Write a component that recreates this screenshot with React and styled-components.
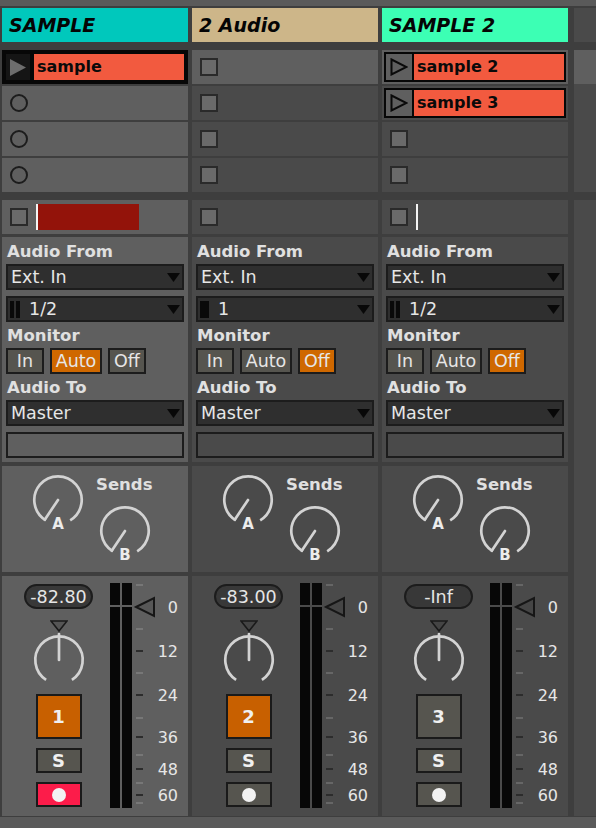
import React from 'react';
import styled, { createGlobalStyle } from 'styled-components';

const FONT = '"DejaVu Sans", "Liberation Sans", sans-serif';
const SEL = '#5f5f5f';
const DIM = '#4a4a4a';
const GAP = '#3e3e3e';
const EDGE = '#1c1c1c';
const BTN = '#56554f';
const TXT = '#e6e6e6';

const Global = createGlobalStyle`
  html, body { margin: 0; padding: 0; background: ${GAP}; }
  body { font-family: ${FONT}; }
  #root { width: 596px; height: 828px; }
  *, *::before, *::after { box-sizing: border-box; }
`;

const Page = styled.div`
  width: 596px;
  height: 828px;
  background: ${GAP};
  display: flex;
  flex-direction: column;
  overflow: hidden;
`;

const EdgeStrip = styled.div`
  flex: none;
  height: ${(p) => p.$h}px;
  background: #5a5a5a;
  margin-top: ${(p) => p.$mt || 0}px;
  margin-bottom: ${(p) => p.$mb || 0}px;
`;

const Tracks = styled.div`
  flex: none;
  height: 808px;
  display: flex;
  gap: 4px;
  padding-left: 2px;
`;

const TrackCol = styled.div`
  width: 186px;
  display: flex;
  flex-direction: column;
`;

const Header = styled.div`
  height: 34px;
  background: ${(p) => p.$color};
  color: #050505;
  font-weight: bold;
  font-style: italic;
  font-size: 19px;
  line-height: 34px;
  padding-left: 7px;
  white-space: nowrap;
`;

const Slots = styled.div`
  margin-top: 8px;
  display: flex;
  flex-direction: column;
  gap: 2px;
`;

const Slot = styled.div`
  height: 34px;
  background: ${(p) => p.$bg};
  display: flex;
  align-items: center;
  padding-left: ${(p) => (p.$full ? 0 : 8)}px;
`;

const StopSquare = styled.span`
  flex: none;
  width: 18px;
  height: 18px;
  border: 2px solid #2a2a2a;
  background: #6a6a6a;
`;

const ArmCircle = styled.span`
  flex: none;
  width: 18px;
  height: 18px;
  border-radius: 50%;
  border: 2px solid ${EDGE};
`;

const ClipFrame = styled.div`
  flex: 1;
  align-self: stretch;
  margin: ${(p) => (p.$sel ? '0' : '2px 2px 2px -6px')};
  border: ${(p) => (p.$sel ? 4 : 2)}px solid #070707;
  background: #070707;
  display: flex;
  gap: ${(p) => (p.$sel ? 4 : 2)}px;
`;

const PlayArea = styled.div`
  flex: none;
  width: ${(p) => (p.$sel ? 24 : 26)}px;
  background: ${(p) => (p.$sel ? '#151515' : SEL)};
  display: flex;
  align-items: center;
  justify-content: center;
`;

const ClipName = styled.div`
  flex: 1;
  background: #f25a3f;
  color: #0a0a0a;
  font-weight: bold;
  font-size: 16px;
  line-height: 26px;
  padding-left: 3px;
  white-space: nowrap;
`;

const StatusRow = styled(Slot)`
  margin-top: 8px;
`;

const LaunchBar = styled.span`
  flex: none;
  margin-left: 8px;
  height: 26px;
  width: ${(p) => p.$w}px;
  border-left: 2px solid #f4f4f4;
  background: #93130a;
`;

const IOPanel = styled.div`
  margin-top: 3px;
  height: 225px;
  background: ${(p) => p.$bg};
  padding: 1px 4px 0;
  display: flex;
  flex-direction: column;
`;

const SectionLabel = styled.div`
  height: 26px;
  line-height: 28px;
  padding-left: 1px;
  font-weight: bold;
  font-size: 16.5px;
  color: #e0e0e0;
  white-space: nowrap;
`;

const Chooser = styled.div`
  height: 26px;
  margin-top: ${(p) => p.$mt || 0}px;
  background: #2f2f2f;
  border: 2px solid ${EDGE};
  display: flex;
  align-items: center;
  padding: 0 2px 0 3px;
  font-size: 17.5px;
  color: ${TXT};
  white-space: nowrap;
`;

const ChooserText = styled.span`
  flex: 1;
  margin-left: ${(p) => p.$ml || 0}px;
`;

const ChannelIcon = styled.span`
  display: flex;
  gap: 2px;
  height: 17px;
  margin-left: -1px;
`;

const ChannelBar = styled.span`
  width: ${(p) => p.$w}px;
  background: #0a0a0a;
`;

const MonitorRow = styled.div`
  height: 26px;
  display: flex;
  gap: 6px;
`;

const MonitorButton = styled.div`
  width: ${(p) => p.$w}px;
  border: 2px solid ${EDGE};
  background: ${(p) => (p.$on ? '#cf6800' : BTN)};
  color: ${TXT};
  font-size: 17.5px;
  display: flex;
  align-items: center;
  justify-content: center;
`;

const EmptyBox = styled.div`
  height: 26px;
  margin-top: 6px;
  border: 2px solid ${EDGE};
`;

const SendsPanel = styled.div`
  margin-top: 4px;
  height: 106px;
  background: ${(p) => p.$bg};
  display: flex;
  padding: 7px 0 0 29px;
`;

const KnobGroup = styled.div`
  display: flex;
  flex-direction: column;
  align-items: center;
  width: 54px;
  margin-left: ${(p) => p.$ml || 0}px;
  margin-top: ${(p) => p.$mt || 0}px;
`;

const KnobLetter = styled.span`
  margin-top: -10px;
  font-weight: bold;
  font-size: 15px;
  line-height: 14px;
  color: #ececec;
`;

const SendsSide = styled.div`
  display: flex;
  flex-direction: column;
  margin-left: 11px;
`;

const SendsTitle = styled.div`
  margin-top: 2px;
  height: 20px;
  line-height: 20px;
  font-weight: bold;
  font-size: 16.5px;
  color: #e0e0e0;
`;

const Mixer = styled.div`
  margin-top: 4px;
  height: 240px;
  background: ${(p) => p.$bg};
  display: flex;
`;

const MixerControls = styled.div`
  width: 108px;
  padding-left: 5px;
  display: flex;
  flex-direction: column;
  align-items: center;
`;

const VolumePill = styled.div`
  margin-top: 8px;
  width: 69px;
  height: 25px;
  border: 2px solid ${EDGE};
  border-radius: 13px;
  background: #383838;
  color: ${TXT};
  font-size: 17.5px;
  display: flex;
  align-items: center;
  justify-content: center;
`;

const PanMark = styled.svg`
  margin-top: 11px;
  display: block;
`;

const PanKnob = styled.div`
  margin-top: 1px;
  height: 54px;
`;

const TrackButton = styled.div`
  width: 46px;
  height: ${(p) => p.$h}px;
  margin-top: ${(p) => p.$mt}px;
  border: 2px solid #1a1a1a;
  background: ${(p) => p.$bg || BTN};
  color: #f0f0f0;
  font-weight: bold;
  font-size: 18px;
  display: flex;
  align-items: center;
  justify-content: center;
`;

const ArmDot = styled.span`
  width: 14px;
  height: 14px;
  border-radius: 50%;
  background: #f2f2f2;
`;

const MeterSvg = styled.svg`
  display: block;
  flex: none;
`;

const RightStrip = styled.div`
  margin-left: 2px;
  width: 22px;
  display: flex;
  flex-direction: column;
`;

const StripBlock = styled.div`
  flex: ${(p) => (p.$grow ? 1 : 'none')};
  height: ${(p) => (p.$grow ? 'auto' : `${p.$h}px`)};
  margin-top: ${(p) => p.$mt || 0}px;
  background: ${(p) => p.$bg};
`;

function Knob({ mode }) {
  const size = 54;
  const c = 27;
  const r = 23.7;
  const gap = mode === 'pan' ? 33 : 31;
  const rad = (d) => (d * Math.PI) / 180;
  const pt = (d) => [c + r * Math.sin(rad(d)), c - r * Math.cos(rad(d))];
  const [x1, y1] = pt(180 + gap);
  const [x2, y2] = pt(180 - gap);
  const end = mode === 'pan' ? [c, 1] : pt(180 + gap + 3);
  const col = '#d3d3d3';
  return (
    <svg width={size} height={size} viewBox={`0 0 ${size} ${size}`} style={{ display: 'block' }}>
      <path d={`M${x1} ${y1} A${r} ${r} 0 1 1 ${x2} ${y2}`} fill="none" stroke={col} strokeWidth="2.7" />
      <line x1={c} y1={c} x2={end[0]} y2={end[1]} stroke={col} strokeWidth="2.7" strokeLinecap="round" />
    </svg>
  );
}

function PlayTri({ sel }) {
  return sel ? (
    <svg width="16" height="17" viewBox="0 0 16 17">
      <polygon points="0,0 16,8.5 0,17" fill="#6d6d6d" />
    </svg>
  ) : (
    <svg width="18" height="18" viewBox="0 0 18 18">
      <polygon points="1.5,1.5 16.5,9 1.5,16.5" fill="none" stroke="#0a0a0a" strokeWidth="2" />
    </svg>
  );
}

function DownTri() {
  return (
    <svg width="13" height="9" viewBox="0 0 13 9" style={{ flex: 'none' }}>
      <polygon points="0,0 13,0 6.5,9" fill="#080808" />
    </svg>
  );
}

const TICKS = [
  [9, 0], [53, 0], [75, 1], [97, 0], [119, 1], [142, 0],
  [161, 1], [179, 0], [193, 1], [207, 0], [219, 1], [227, 0],
];
const SCALE = [[31, '0'], [75, '12'], [119, '24'], [161, '36'], [193, '48'], [219, '60']];

function Meter({ bg }) {
  const light = bg === SEL ? '#777' : '#666';
  return (
    <MeterSvg width="74" height="240" viewBox="0 0 74 240">
      <rect x="0" y="7" width="10" height="22" fill="#070707" />
      <rect x="12" y="7" width="10" height="22" fill="#070707" />
      <rect x="0" y="31" width="10" height="201" fill="#070707" />
      <rect x="12" y="31" width="10" height="201" fill="#070707" />
      {TICKS.map(([y, major]) => (
        <rect key={y} x="26" y={y - 1} width="7" height="2" fill={major ? '#2c2c2c' : light} />
      ))}
      <polygon points="26,31 44,22 44,40" fill={bg === SEL ? '#575757' : '#454545'} stroke="#161616" strokeWidth="2" strokeLinejoin="miter" />
      {SCALE.map(([y, t]) => (
        <text key={t} x="68" y={y + 6} textAnchor="end" fontFamily={FONT} fontSize="16" fill={TXT}>
          {t}
        </text>
      ))}
    </MeterSvg>
  );
}

const TRACKS = [
  {
    name: 'SAMPLE', color: '#00c8bc', selected: true, empty: 'arm',
    clips: [{ name: 'sample', sel: true }, null, null, null],
    launch: 103, channel: [4, 4], input: '1/2', monitor: 'Auto',
    vol: '-82.80', num: '1', active: true, arm: true,
  },
  {
    name: '2 Audio', color: '#cdb689', selected: false, empty: 'stop',
    clips: [null, null, null, null],
    launch: 0, channel: [9], input: '1', monitor: 'Off',
    vol: '-83.00', num: '2', active: true, arm: false,
  },
  {
    name: 'SAMPLE 2', color: '#3cffb4', selected: false, empty: 'stop',
    clips: [{ name: 'sample 2' }, { name: 'sample 3' }, null, null],
    launch: 2, channel: [4, 4], input: '1/2', monitor: 'Off',
    vol: '-Inf', num: '3', active: false, arm: false,
  },
];

function Track({ t }) {
  const bg = t.selected ? SEL : DIM;
  return (
    <TrackCol>
      <Header $color={t.color}>{t.name}</Header>
      <Slots>
        {t.clips.map((clip, i) => {
          const rowBg = t.selected || i === 0 ? SEL : DIM;
          if (clip) {
            return (
              <Slot key={i} $bg={rowBg} $full={clip.sel}>
                <ClipFrame $sel={clip.sel}>
                  <PlayArea $sel={clip.sel}>
                    <PlayTri sel={clip.sel} />
                  </PlayArea>
                  <ClipName>{clip.name}</ClipName>
                </ClipFrame>
              </Slot>
            );
          }
          return (
            <Slot key={i} $bg={rowBg}>
              {t.empty === 'arm' ? <ArmCircle /> : <StopSquare />}
            </Slot>
          );
        })}
      </Slots>
      <StatusRow $bg={bg}>
        <StopSquare />
        {t.launch > 0 && <LaunchBar $w={t.launch} />}
      </StatusRow>
      <IOPanel $bg={bg}>
        <SectionLabel>Audio From</SectionLabel>
        <Chooser>
          <ChooserText>Ext. In</ChooserText>
          <DownTri />
        </Chooser>
        <Chooser $mt={6}>
          <ChannelIcon>
            {t.channel.map((w, i) => (
              <ChannelBar key={i} $w={w} />
            ))}
          </ChannelIcon>
          <ChooserText $ml={t.channel.length > 1 ? 9 : 9}>{t.input}</ChooserText>
          <DownTri />
        </Chooser>
        <SectionLabel>Monitor</SectionLabel>
        <MonitorRow>
          <MonitorButton $w={38} $on={t.monitor === 'In'}>In</MonitorButton>
          <MonitorButton $w={52} $on={t.monitor === 'Auto'}>Auto</MonitorButton>
          <MonitorButton $w={38} $on={t.monitor === 'Off'}>Off</MonitorButton>
        </MonitorRow>
        <SectionLabel>Audio To</SectionLabel>
        <Chooser>
          <ChooserText>Master</ChooserText>
          <DownTri />
        </Chooser>
        <EmptyBox />
      </IOPanel>
      <SendsPanel $bg={bg}>
        <KnobGroup>
          <Knob mode="send" />
          <KnobLetter>A</KnobLetter>
        </KnobGroup>
        <SendsSide>
          <SendsTitle>Sends</SendsTitle>
          <KnobGroup $ml={2} $mt={9}>
            <Knob mode="send" />
            <KnobLetter>B</KnobLetter>
          </KnobGroup>
        </SendsSide>
      </SendsPanel>
      <Mixer $bg={bg}>
        <MixerControls>
          <VolumePill>{t.vol}</VolumePill>
          <PanMark width="18" height="12" viewBox="0 0 18 12">
            <polygon points="1,1 17,1 9,11" fill={t.selected ? '#555' : '#444'} stroke="#1a1a1a" strokeWidth="1.6" />
          </PanMark>
          <PanKnob>
            <Knob mode="pan" />
          </PanKnob>
          <TrackButton $h={45} $mt={7} $bg={t.active ? '#c86000' : BTN}>{t.num}</TrackButton>
          <TrackButton $h={25} $mt={9}>S</TrackButton>
          <TrackButton $h={25} $mt={9} $bg={t.arm ? '#fc1c4a' : BTN}>
            <ArmDot />
          </TrackButton>
        </MixerControls>
        <Meter bg={bg} />
      </Mixer>
    </TrackCol>
  );
}

export default function App() {
  return (
    <Page>
      <Global />
      <EdgeStrip $h={6} $mb={2} />
      <Tracks>
        {TRACKS.map((t) => (
          <Track key={t.name} t={t} />
        ))}
        <RightStrip>
          <StripBlock $h={34} $bg={DIM} />
          <StripBlock $h={34} $mt={8} $bg={SEL} />
          <StripBlock $h={108} $bg={DIM} />
          <StripBlock $grow $mt={8} $bg={DIM} />
        </RightStrip>
      </Tracks>
      <EdgeStrip $h={11} $mt={1} />
    </Page>
  );
}
